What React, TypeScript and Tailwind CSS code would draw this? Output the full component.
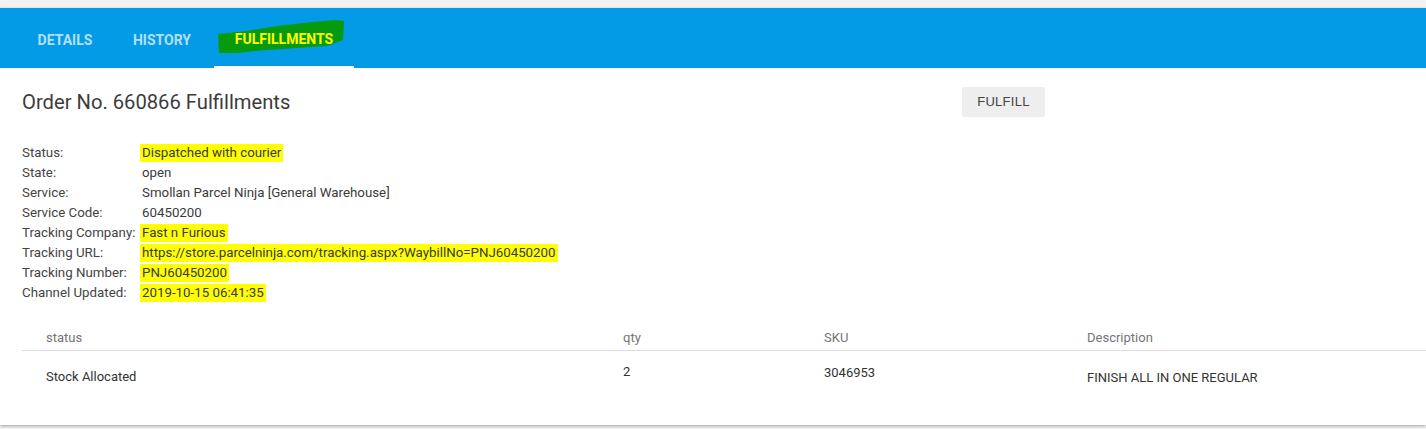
import React from "react";

const details: { label: string; value: string; mark?: boolean }[] = [
  { label: "Status:", value: "Dispatched with courier", mark: true },
  { label: "State:", value: "open" },
  { label: "Service:", value: "Smollan Parcel Ninja [General Warehouse]" },
  { label: "Service Code:", value: "60450200" },
  { label: "Tracking Company:", value: "Fast n Furious", mark: true },
  { label: "Tracking URL:", value: "https://store.parcelninja.com/tracking.aspx?WaybillNo=PNJ60450200", mark: true },
  { label: "Tracking Number:", value: "PNJ60450200", mark: true },
  { label: "Channel Updated:", value: "2019-10-15 06:41:35", mark: true },
];

export default function App() {
  return (
    <div className="w-[1426px] h-[429px] bg-[#f3f3f3] pt-2 font-['Roboto',sans-serif] overflow-hidden">
      <div className="bg-white shadow-[0_1px_3px_rgba(0,0,0,0.35)] h-[417px]">
        {/* tab bar */}
        <div className="h-[60px] bg-[#039be5] flex pl-5">
          <div className="w-[90px] pt-1 flex items-center justify-center text-[14px] font-bold text-white/70">DETAILS</div>
          <div className="w-[104px] pt-1 flex items-center justify-center text-[14px] font-bold text-white/70">HISTORY</div>
          <div className="relative w-[140px] pt-1 flex items-center justify-center text-[14px] font-bold border-b-2 border-white">
            <svg className="absolute left-[3px] top-[10px]" width="128" height="36" viewBox="0 0 128 36">
              <polygon
                points="1,16 30,13 60,8 95,4 118,2 127,3 126,22 110,28 80,30 50,32 20,35 2,35"
                fill="#069a0e"
              />
            </svg>
            <span className="relative text-[#ffff00]">FULFILLMENTS</span>
          </div>
        </div>

        {/* heading */}
        <div className="flex items-center h-[68px] pl-[22px]">
          <h1 className="w-[940px] text-[20.2px] text-[#3c3c3c]">Order No. 660866 Fulfillments</h1>
          <button className="h-[30px] w-[83px] bg-[#eeeeee] rounded-[2px] text-[13px] text-[#444] tracking-[0.3px] font-['Liberation_Sans',sans-serif]">
            FULFILL
          </button>
        </div>

        {/* details */}
        <div className="pl-[22px] pt-[7px] text-[13.3px] text-[#3a3a3a]">
          {details.map((d) => (
            <div key={d.label} className="flex h-[20px] items-center">
              <div className="w-[120px] text-[#444]">{d.label}</div>
              <div className={d.mark ? "bg-[#ffff00] px-[2px] -ml-[2px] leading-[18px]" : ""}>{d.value}</div>
            </div>
          ))}
        </div>

        {/* table */}
        <div className="ml-[22px] mt-[23px] text-[13px] leading-[20px]">
          <div className="flex h-[25px] items-center border-b border-[#dcdcdc] text-[#757575]">
            <div className="w-[601px] pl-[24px]">status</div>
            <div className="w-[201px]">qty</div>
            <div className="w-[263px]">SKU</div>
            <div>Description</div>
          </div>
          <div className="flex h-[52px] text-[#333]">
            <div className="w-[601px] pl-[24px] pt-[16px]">Stock Allocated</div>
            <div className="w-[201px] pt-[11px]">2</div>
            <div className="w-[263px] pt-[12px]">3046953</div>
            <div className="pt-[17px]">FINISH ALL IN ONE REGULAR</div>
          </div>
        </div>
      </div>
    </div>
  );
}
